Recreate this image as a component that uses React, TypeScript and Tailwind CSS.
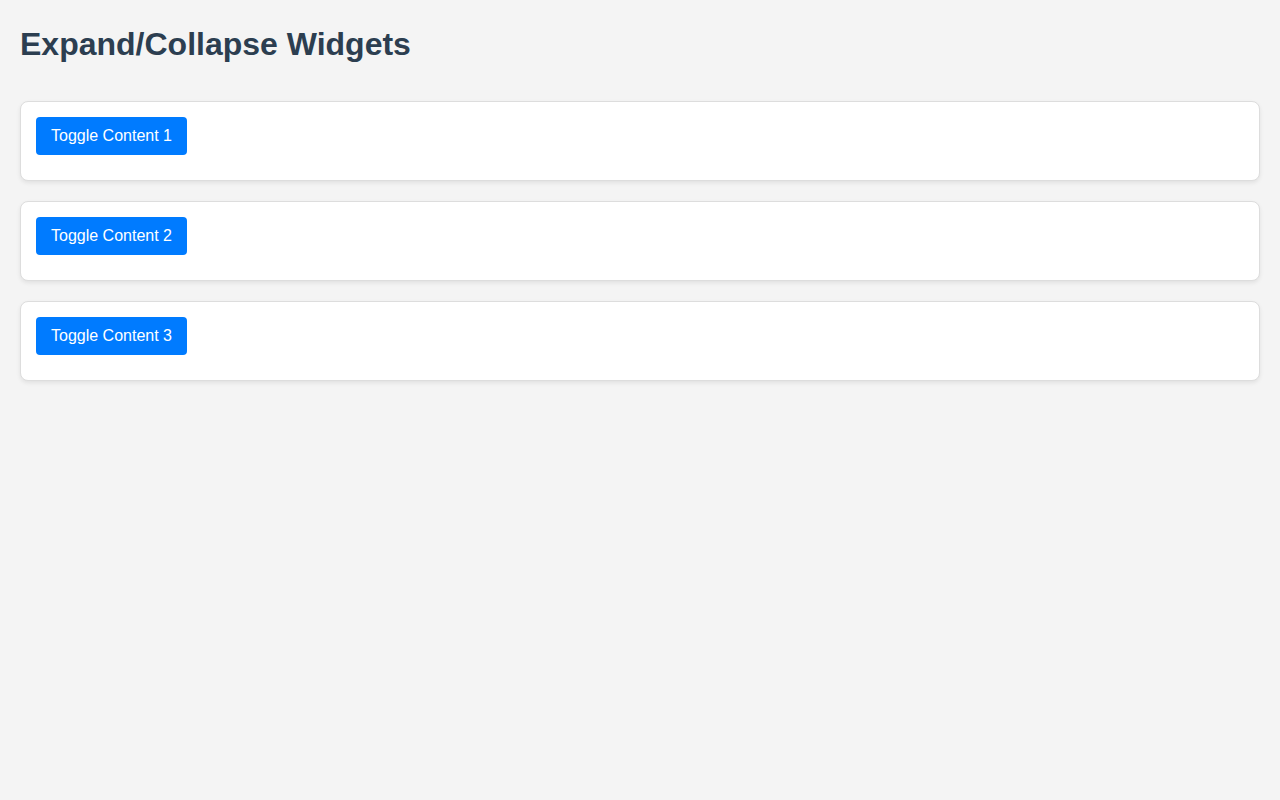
import React from "react";

export default function App() {
  const items = [1, 2, 3];
  return (
    <div className="min-h-[800px] bg-[#f4f4f4] p-[20px] font-['Liberation_Sans',Arial,sans-serif]">
      <h1 className="mt-[6px] mb-[38px] text-[32px] leading-[37px] font-bold text-[#2c3e50]">
        Expand/Collapse Widgets
      </h1>
      <div className="flex flex-col gap-[20px]">
        {items.map((n) => (
          <div
            key={n}
            className="rounded-[8px] border border-[#dddddd] bg-white p-[15px] pb-[25px] shadow-[0_2px_4px_rgba(0,0,0,0.08)]"
          >
            <button className="h-[38px] rounded-[4px] bg-[#007bff] px-[15px] text-[16px] leading-[18px] text-white">
              Toggle Content {n}
            </button>
          </div>
        ))}
      </div>
    </div>
  );
}
